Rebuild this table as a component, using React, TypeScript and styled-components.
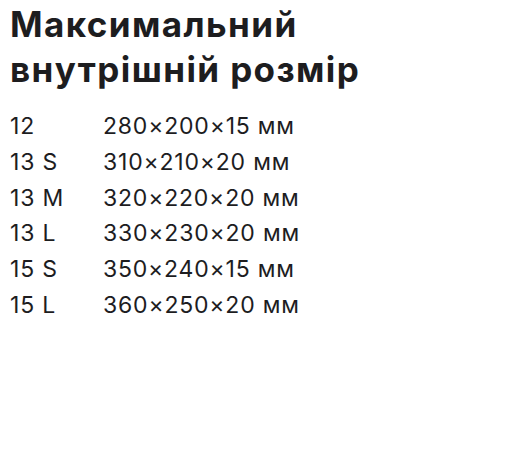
import { Fragment } from "react";
import styled, { createGlobalStyle } from "styled-components";

const GlobalStyle = createGlobalStyle`
  body {
    margin: 0;
    background: #ffffff;
    font-family: Inter, "Noto Sans", "Liberation Sans", sans-serif;
    color: #1d1d1f;
  }
`;

type Size = {
  name: string;
  dims: string;
};

const sizes: Size[] = [
  { name: "12", dims: "280×200×15 мм" },
  { name: "13 S", dims: "310×210×20 мм" },
  { name: "13 M", dims: "320×220×20 мм" },
  { name: "13 L", dims: "330×230×20 мм" },
  { name: "15 S", dims: "350×240×15 мм" },
  { name: "15 L", dims: "360×250×20 мм" },
];

const Section = styled.section`
  padding: 2px 10px 0;
`;

const Title = styled.h2`
  margin: 0;
  font-size: 35px;
  line-height: 45px;
  font-weight: 700;
  letter-spacing: 1.4px;
`;

const Table = styled.dl`
  margin: 17px 0 0;
  display: grid;
  grid-template-columns: 93px auto;
  justify-content: start;
  font-size: 23px;
  line-height: 35.8px;
  font-weight: 400;
  letter-spacing: 0.8px;
`;

const Name = styled.dt`
  margin: 0;
`;

const Dims = styled.dd`
  margin: 0;
`;

export default function App() {
  return (
    <>
      <GlobalStyle />
      <Section>
        <Title>
          Максимальний
          <br />
          внутрішній розмір
        </Title>
        <Table>
          {sizes.map((s) => (
            <Fragment key={s.name}>
              <Name>{s.name}</Name>
              <Dims>{s.dims}</Dims>
            </Fragment>
          ))}
        </Table>
      </Section>
    </>
  );
}
